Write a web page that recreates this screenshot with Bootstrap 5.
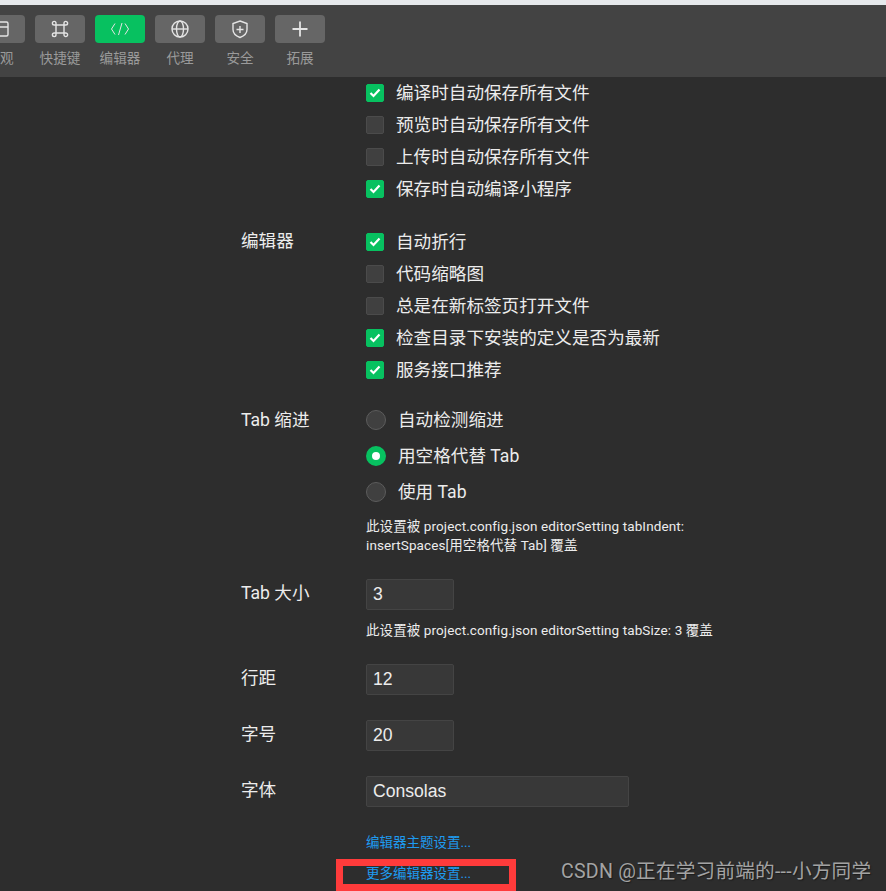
<!doctype html>
<html lang="zh">
<head>
<meta charset="utf-8">
<title>编辑器设置</title>
<link href="https://cdn.jsdelivr.net/npm/bootstrap@5.3.0/dist/css/bootstrap.min.css" rel="stylesheet">
<style>
html,body{height:891px;overflow:hidden}
body{background:#2d2d2d;color:#ececec;font-family:Roboto,"Noto Sans CJK SC",sans-serif;position:relative}
.topstrip{height:5px;background:#e6e9ec}
.toolbar{height:72px;background:#434343;padding-top:10px;margin-left:-25px;gap:10px}
.toolitem{width:50px;text-align:center;color:#9a9a9a;font-size:13.6px;line-height:18px;white-space:nowrap}
.toolbtn{height:28px;border-radius:4px;background:#666;margin-bottom:6px;color:#e4e4e4}
.toolbtn.on{background:#07c160}
.toolbtn svg{width:22px;height:22px;fill:none;stroke:currentColor;stroke-width:1.4}
.settings{padding-left:241px}
.lab{width:125px;flex:none;font-size:17.6px;line-height:24px}
.optrow{height:32px;font-size:17.6px;gap:12px}
.cbx{width:18px;height:18px;border-radius:2px;background:#404040;border:1px solid #4b4b4b;flex:none}
.cbx.on{background:#07c160;border-color:#07c160}
.cbx svg{width:16px;height:16px;display:block;fill:none;stroke:#fff;stroke-width:2.2}
.rad{width:20px;height:20px;border-radius:50%;background:#404040;border:1px solid #5c5c5c;flex:none}
.rad.on{background:#fff;border:6px solid #07c160}
.radrow{height:36px;font-size:17.6px;gap:12px}
.note{font-size:13.5px;line-height:19px;letter-spacing:.1px}
.fld{width:88px;height:31px;background:#383838;border:1px solid #444;border-radius:2px;font-size:17.6px;line-height:29px;padding:0 6px;font-family:"Liberation Sans",sans-serif}
.fld.wide{width:263px}
.lnk{font-size:13.5px;line-height:19px;color:#1e9bf0;text-decoration:none;display:block}
.redbox{position:absolute;left:336px;top:859px;width:180px;height:32px;border:7px solid #ff3b3b}
.wm{position:absolute;left:561px;top:860px;font-size:19.6px;line-height:24px;letter-spacing:.24px;color:#a3a3a3;font-family:Roboto,"Noto Sans CJK SC",sans-serif;white-space:nowrap;text-shadow:1px 1px 1px #1c1c1c}
.sect2{margin-top:21px}
.sect2 .lab{padding-top:3px}
.sect3{margin-top:16px}
.sect3 .lab{padding-top:6px}
.notea{margin-top:7px}
.sect4{margin-top:24px}
.sect4 .lab{padding-top:2px}
.noteb{margin-top:11px}
.sect5{margin-top:24px}
.sect6{margin-top:25px}
.sect5 .lab,.sect6 .lab{padding-top:2px}
.linkwrap{margin-left:125px;margin-top:26px}
.lnk2{margin-top:12px}
</style>
</head>
<body>
<div class="topstrip"></div>
<div class="toolbar d-flex">
  <div class="toolitem"><div class="toolbtn d-flex align-items-center justify-content-center"><svg viewBox="0 0 22 22"><rect x="3" y="4" width="16" height="14" rx="1.5"/><path d="M3 9h16M10 9v9"/></svg></div>外观</div>
  <div class="toolitem"><div class="toolbtn d-flex align-items-center justify-content-center"><svg viewBox="0 0 22 22"><path d="M7 7h8v8H7zM7 7H5.2A1.8 1.8 0 1 1 7 5.2zM15 7V5.2A1.8 1.8 0 1 1 16.8 7zM15 15h1.8A1.8 1.8 0 1 1 15 16.8zM7 15v1.800A1.8 1.8 0 1 1 5.2 15z"/></svg></div>快捷键</div>
  <div class="toolitem"><div class="toolbtn on d-flex align-items-center justify-content-center"><svg viewBox="0 0 22 22"><path d="M6 5.500L2.500 11 6 16.500M16 5.500l3.500 5.500-3.500 5.500M13 5L9.500 17" stroke-width="1"/></svg></div>编辑器</div>
  <div class="toolitem"><div class="toolbtn d-flex align-items-center justify-content-center"><svg viewBox="0 0 22 22"><circle cx="11" cy="11" r="8"/><ellipse cx="11" cy="11" rx="3.500" ry="8"/><path d="M3 11h16"/></svg></div>代理</div>
  <div class="toolitem"><div class="toolbtn d-flex align-items-center justify-content-center"><svg viewBox="0 0 22 22"><path d="M11 3l7 2.500v6c0 4-3 6.500-7 8-4-1.500-7-4-7-8v-6zM11 8v7M7.500 11.500h7"/></svg></div>安全</div>
  <div class="toolitem"><div class="toolbtn d-flex align-items-center justify-content-center"><svg viewBox="0 0 22 22"><path d="M11 3.500v15M3.500 11h15" stroke-width="1.800"/></svg></div>拓展</div>
</div>
<div class="settings">
  <div class="d-flex">
    <div class="lab"></div>
    <div>
      <div class="optrow d-flex align-items-center"><span class="cbx on"><svg viewBox="0 0 16 16"><path d="M3.500 8l3 3 6-6.500"/></svg></span>编译时自动保存所有文件</div>
      <div class="optrow d-flex align-items-center"><span class="cbx"></span>预览时自动保存所有文件</div>
      <div class="optrow d-flex align-items-center"><span class="cbx"></span>上传时自动保存所有文件</div>
      <div class="optrow d-flex align-items-center"><span class="cbx on"><svg viewBox="0 0 16 16"><path d="M3.500 8l3 3 6-6.500"/></svg></span>保存时自动编译小程序</div>
    </div>
  </div>
  <div class="d-flex sect2">
    <div class="lab">编辑器</div>
    <div>
      <div class="optrow d-flex align-items-center"><span class="cbx on"><svg viewBox="0 0 16 16"><path d="M3.500 8l3 3 6-6.500"/></svg></span>自动折行</div>
      <div class="optrow d-flex align-items-center"><span class="cbx"></span>代码缩略图</div>
      <div class="optrow d-flex align-items-center"><span class="cbx"></span>总是在新标签页打开文件</div>
      <div class="optrow d-flex align-items-center"><span class="cbx on"><svg viewBox="0 0 16 16"><path d="M3.500 8l3 3 6-6.500"/></svg></span>检查目录下安装的定义是否为最新</div>
      <div class="optrow d-flex align-items-center"><span class="cbx on"><svg viewBox="0 0 16 16"><path d="M3.500 8l3 3 6-6.500"/></svg></span>服务接口推荐</div>
    </div>
  </div>
  <div class="d-flex sect3">
    <div class="lab">Tab 缩进</div>
    <div>
      <div class="radrow d-flex align-items-center"><span class="rad"></span>自动检测缩进</div>
      <div class="radrow d-flex align-items-center"><span class="rad on"></span>用空格代替 Tab</div>
      <div class="radrow d-flex align-items-center"><span class="rad"></span>使用 Tab</div>
      <div class="note notea">此设置被 project.config.json editorSetting tabIndent:<br>insertSpaces[用空格代替 Tab] 覆盖</div>
    </div>
  </div>
  <div class="d-flex sect4">
    <div class="lab">Tab 大小</div>
    <div>
      <div class="fld">3</div>
      <div class="note noteb">此设置被 project.config.json editorSetting tabSize: 3 覆盖</div>
    </div>
  </div>
  <div class="d-flex sect5"><div class="lab">行距</div><div class="fld">12</div></div>
  <div class="d-flex sect6"><div class="lab">字号</div><div class="fld">20</div></div>
  <div class="d-flex sect6"><div class="lab">字体</div><div class="fld wide">Consolas</div></div>
  <div class="linkwrap">
    <a class="lnk" href="#">编辑器主题设置...</a>
    <a class="lnk lnk2" href="#">更多编辑器设置...</a>
  </div>
</div>
<div class="redbox"></div>
<div class="wm">CSDN @正在学习前端的---小方同学</div>
</body>
</html>
